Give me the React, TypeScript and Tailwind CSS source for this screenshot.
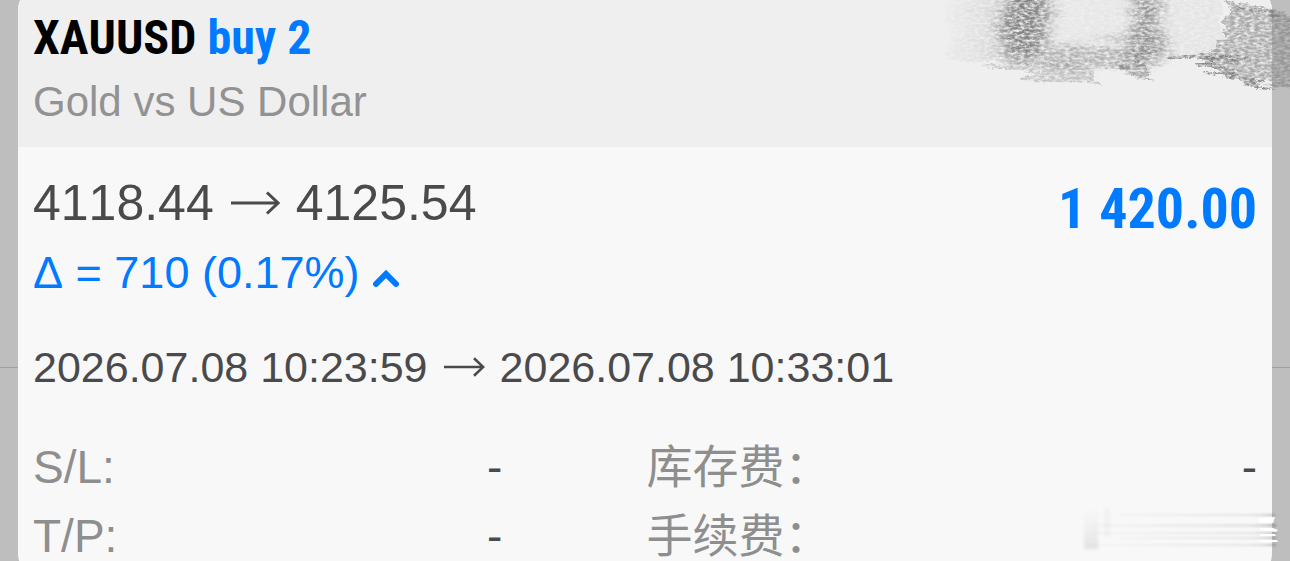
import type { ReactNode } from "react";

const CONDENSED =
  "font-['Avenir_Next_Condensed','Roboto_Condensed','Open_Sans_Condensed','Liberation_Sans_Narrow','Liberation_Sans',sans-serif]";

function Arrow({ className }: { className: string }) {
  return (
    <svg
      className={className}
      viewBox="0 0 50 24"
      fill="none"
      stroke="currentColor"
      strokeWidth="3"
      role="img"
      aria-label="to"
    >
      <path d="M1 12H48" />
      <path d="M37 1.500L48 12L37 22.500" />
    </svg>
  );
}

function Chevron() {
  return (
    <svg
      className="mt-3 h-5 w-7"
      viewBox="0 0 28 20"
      fill="none"
      stroke="currentColor"
      strokeWidth="6"
      strokeLinecap="round"
      aria-hidden="true"
    >
      <path d="M4 15L14 5L24 15" strokeLinejoin="miter" />
    </svg>
  );
}

function Scribble() {
  return (
    <svg
      className="pointer-events-none absolute top-0 right-0 h-[90px] w-[360px]"
      viewBox="0 0 360 90"
      aria-hidden="true"
    >
      <defs>
        <filter
          id="grain"
          x="-5%"
          y="-20%"
          width="110%"
          height="140%"
          colorInterpolationFilters="sRGB"
        >
          <feTurbulence type="fractalNoise" baseFrequency="0.2 0.4" numOctaves="4" seed="8" result="fine" />
          <feTurbulence type="fractalNoise" baseFrequency="0.02 0.12" numOctaves="3" seed="3" result="coarse" />
          <feColorMatrix
            in="fine"
            type="matrix"
            values="0 0 0 0 0  0 0 0 0 0  0 0 0 0 0  2.2 0 0 0 -0.45"
            result="mask"
          />
          <feDisplacementMap
            in="SourceGraphic"
            in2="coarse"
            scale="18"
            xChannelSelector="R"
            yChannelSelector="A"
            result="bent"
          />
          <feDisplacementMap in="bent" in2="fine" scale="5" xChannelSelector="G" yChannelSelector="B" result="rough" />
          <feComposite in="rough" in2="mask" operator="in" result="grained" />
          <feGaussianBlur in="grained" stdDeviation="0.400" />
        </filter>
        <filter id="soft" x="-40%" y="-20%" width="180%" height="140%" colorInterpolationFilters="sRGB">
          <feGaussianBlur stdDeviation="8 3" />
        </filter>
        <linearGradient id="wash" x1="0" x2="1" y1="0" y2="0">
          <stop offset="0" stopColor="#9a9a9a" stopOpacity="0" />
          <stop offset="0.250" stopColor="#9a9a9a" stopOpacity="0.35" />
          <stop offset="0.400" stopColor="#9a9a9a" stopOpacity="0.08" />
          <stop offset="1" stopColor="#9a9a9a" stopOpacity="0.12" />
        </linearGradient>
      </defs>
      <g filter="url(#grain)">
        <path d="M12 -20H290V54L240 60L222 70L165 64L50 64L20 60Z" fill="url(#wash)" />
        <g filter="url(#soft)">
          <path d="M78 -20H122L118 26L112 58L72 60L74 20Z" fill="#666666" opacity="0.75" />
          <path d="M208 -20H232L230 24L236 52L222 68L198 64L204 20Z" fill="#6c6c6c" opacity="0.7" />
          <path d="M118 48L200 38L212 68L164 66L150 72L110 66Z" fill="#808080" opacity="0.5" />
        </g>
        <path d="M296 16L312 2L380 20V66L358 86L310 76L272 62L290 42Z" fill="#808080" opacity="0.62" />
        <path d="M238 54L300 55L330 60L300 63L240 59Z" fill="#6c6c6c" opacity="0.65" />
        <path d="M50 67L115 62L160 68L170 82L92 81L108 72Z" fill="#808080" opacity="0.4" />
        <path d="M174 68L210 62L228 82Z" fill="#6c6c6c" opacity="0.55" />
        <path d="M268 66L290 66L350 90L282 74Z" fill="#5c5c5c" opacity="0.7" />
        <path d="M290 0L360 18V24L300 8Z" fill="#6c6c6c" opacity="0.5" />
      </g>
    </svg>
  );
}

function Smear() {
  return (
    <svg
      className="pointer-events-none absolute right-0 bottom-0 h-[60px] w-[220px]"
      viewBox="0 0 220 60"
      aria-hidden="true"
    >
      <defs>
        <linearGradient id="streak" gradientUnits="userSpaceOnUse" x1="20" x2="206" y1="0" y2="0">
          <stop offset="0" stopColor="#999999" stopOpacity="0.03" />
          <stop offset="0.850" stopColor="#999999" stopOpacity="0.2" />
          <stop offset="0.950" stopColor="#8a8a8a" stopOpacity="0.35" />
          <stop offset="1" stopColor="#777777" stopOpacity="0.6" />
        </linearGradient>
        <linearGradient id="patch" x1="0" x2="0" y1="0" y2="1">
          <stop offset="0" stopColor="#ececec" stopOpacity="0.1" />
          <stop offset="1" stopColor="#e2e2e2" />
        </linearGradient>
        <filter id="haze" x="-40%" y="-20%" width="180%" height="140%" colorInterpolationFilters="sRGB">
          <feGaussianBlur stdDeviation="1.800" />
        </filter>
        <filter id="edge" filterUnits="userSpaceOnUse" x="0" y="0" width="220" height="60" colorInterpolationFilters="sRGB">
          <feGaussianBlur stdDeviation="1" />
        </filter>
      </defs>
      <rect x="14" y="10" width="14" height="38" fill="url(#patch)" filter="url(#haze)" />
      <rect x="34" y="8" width="6" height="28" fill="#f1f1f1" filter="url(#haze)" />
      <g fill="url(#streak)" filter="url(#edge)">
        <rect x="50" y="13" width="155" height="2" />
        <rect x="20" y="23" width="186" height="3" />
        <rect x="20" y="31" width="186" height="2" />
        <rect x="50" y="36" width="156" height="2" />
        <rect x="20" y="43" width="186" height="2" />
      </g>
      <g fill="#ffffff">
        <path d="M188 17L205 16L203 22H190Z" />
        <path d="M190 27L203 27L208 29L206 31L190 29Z" />
        <path d="M190 33L205 33L206 35L190 35Z" />
        <path d="M190 39L207 39L208 41L190 41Z" />
      </g>
    </svg>
  );
}

function Detail({ label, children }: { label: string; children?: ReactNode }) {
  return (
    <div className="flex items-center justify-between">
      <dt className="text-[#8e8e8e]">{label}</dt>
      <dd>{children}</dd>
    </div>
  );
}

export default function App() {
  return (
    <main className="relative h-screen overflow-hidden bg-[#bebebe] font-['Liberation_Sans','Noto_Sans_CJK_SC',sans-serif] text-[#4a4a4d] [font-kerning:none]">
      <div className="absolute inset-x-0 top-[367px] h-px bg-[#a0a0a0]" />

      <article className="relative mx-[18px] -mt-3 overflow-hidden rounded-[22px] bg-[#f8f8f8]">
        <header className="bg-[#efefef] px-[15px] pt-5 pb-5">
          <h1 className={`${CONDENSED} text-[48px] leading-[60px] font-bold text-black`}>
            XAUUSD <span className="text-[#007aff]">buy 2</span>
          </h1>
          <p className="mt-[9px] text-[42px] leading-[50px] text-[#929292]">Gold vs US Dollar</p>
        </header>

        <div className="px-[15px] pt-[22px] pb-4">
          <div className="flex items-center justify-between">
            <p className="flex items-center gap-4 text-[50px] leading-[64px]">
              4118.44
              <Arrow className="h-6 w-[50px]" />
              4125.54
            </p>
            <strong className={`${CONDENSED} mt-3 text-[56px] leading-[56px] font-bold text-[#007aff]`}>
              1 420.00
            </strong>
          </div>

          <button
            type="button"
            aria-expanded="true"
            className="mt-2 flex items-center gap-3 text-[45px] leading-[56px] text-[#007aff]"
          >
            Δ = 710 (0.17%)
            <Chevron />
          </button>

          <p className="mt-[38px] flex items-center gap-3.5 text-[43px] leading-[56px]">
            <time>2026.07.08 10:23:59</time>
            <Arrow className="h-5 w-11" />
            <time>2026.07.08 10:33:01</time>
          </p>

          <dl className="mt-12 grid grid-cols-[469fr_610fr] gap-x-36 gap-y-[21px] text-[46px] leading-[48px]">
            <Detail label="S/L:">-</Detail>
            <Detail label="库存费：">-</Detail>
            <Detail label="T/P:">-</Detail>
            <Detail label="手续费：" />
          </dl>
        </div>
      </article>

      <Scribble />
      <Smear />
    </main>
  );
}
